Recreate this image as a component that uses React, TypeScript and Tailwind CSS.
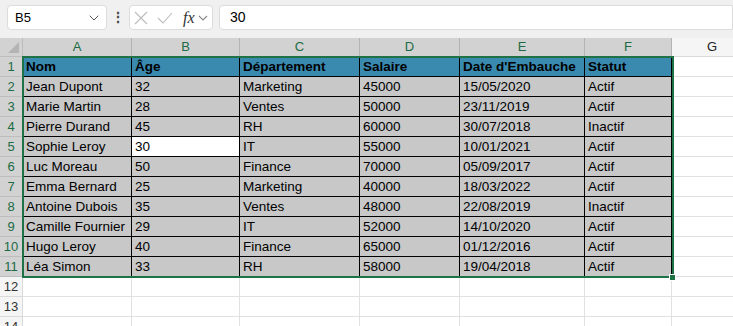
import { ChevronDown } from "lucide-react";

const cols = [
  { key: "A", w: 109 },
  { key: "B", w: 108 },
  { key: "C", w: 120 },
  { key: "D", w: 100 },
  { key: "E", w: 125 },
  { key: "F", w: 87 },
];

const head = ["Nom", "Âge", "Département", "Salaire", "Date d'Embauche", "Statut"];

const rows = [
  ["Jean Dupont", "32", "Marketing", "45000", "15/05/2020", "Actif"],
  ["Marie Martin", "28", "Ventes", "50000", "23/11/2019", "Actif"],
  ["Pierre Durand", "45", "RH", "60000", "30/07/2018", "Inactif"],
  ["Sophie Leroy", "30", "IT", "55000", "10/01/2021", "Actif"],
  ["Luc Moreau", "50", "Finance", "70000", "05/09/2017", "Actif"],
  ["Emma Bernard", "25", "Marketing", "40000", "18/03/2022", "Actif"],
  ["Antoine Dubois", "35", "Ventes", "48000", "22/08/2019", "Inactif"],
  ["Camille Fournier", "29", "IT", "52000", "14/10/2020", "Actif"],
  ["Hugo Leroy", "40", "Finance", "65000", "01/12/2016", "Actif"],
  ["Léa Simon", "33", "RH", "58000", "19/04/2018", "Actif"],
];

const font = { fontFamily: '"Liberation Sans", Arial, sans-serif' };

function RowHead({ n, on }: { n: number; on: boolean }) {
  return (
    <div
      className={`w-[23px] h-[20px] shrink-0 flex items-center justify-center pt-[1px] text-[13px] border-r border-b ${
        on ? "bg-[#d2d2d2] text-[#1c6b44] border-[#bdbdbd]" : "bg-[#f5f5f5] text-[#333] border-[#dadada]"
      }`}
    >
      {n}
    </div>
  );
}

export default function App() {
  return (
    <div className="w-[733px] h-[326px] overflow-hidden bg-white text-black" style={font}>
      {/* formula bar */}
      <div className="h-[38px] bg-[#f0f0f0] flex items-center pl-[7px] pb-[3px]">
        <div className="w-[100px] h-[25px] bg-white border border-[#dcdcdc] rounded-[4px] flex items-center justify-between pl-[7px] pr-[4px] text-[13px]">
          <span>B5</span>
          <ChevronDown size={16} strokeWidth={1.5} className="text-[#555]" />
        </div>
        <div className="w-[22px] flex justify-center text-[14px] font-bold text-[#444]">⋮</div>
        <div className="w-[84px] h-[25px] bg-white border border-[#dcdcdc] rounded-[4px] flex items-center pl-[4px]">
          <svg width="14" height="14" viewBox="0 0 14 14" className="shrink-0">
            <path d="M1 1 L13 13 M13 1 L1 13" stroke="#bcbcbc" strokeWidth="1.1" fill="none" />
          </svg>
          <svg width="16" height="14" viewBox="0 0 16 14" className="shrink-0 ml-[9px]">
            <path d="M1 7 L6 12 L15 2" stroke="#bcbcbc" strokeWidth="1.1" fill="none" />
          </svg>
          <span
            className="ml-[10px] text-[16px] italic text-[#333] leading-none"
            style={{ fontFamily: '"Liberation Serif", serif' }}
          >
            fx
          </span>
          <svg width="10" height="8" viewBox="0 0 10 8" className="shrink-0 ml-[3px]">
            <path d="M1 2 L5 6 L9 2" stroke="#888" strokeWidth="1.1" fill="none" />
          </svg>
        </div>
        <div className="ml-[6px] flex-1 h-[25px] bg-white border border-[#dcdcdc] rounded-l-[4px] flex items-center pl-[10px] text-[14px]">
          30
        </div>
      </div>

      {/* grid */}
      <div className="relative">
        <div className="flex h-[19px]">
          <div className="w-[23px] shrink-0 bg-[#d2d2d2] border-r border-b border-[#bdbdbd] relative">
            <div className="absolute right-[3px] bottom-[3px] w-0 h-0 border-l-[11px] border-l-transparent border-b-[11px] border-b-[#b4b4b4]" />
          </div>
          {cols.map((c) => (
            <div
              key={c.key}
              className="shrink-0 bg-[#d2d2d2] border-r border-b border-[#b4b4b4] flex items-center justify-center text-[13px] text-[#1c6b44]"
              style={{ width: c.w }}
            >
              {c.key}
            </div>
          ))}
          <div className="w-[80px] shrink-0 bg-[#f5f5f5] border-b border-[#dadada] flex items-center justify-center text-[13px] text-[#222]">
            G
          </div>
        </div>

        {[head, ...rows].map((r, i) => (
          <div key={i} className="flex h-[20px]">
            <RowHead n={i + 1} on />
            {r.map((v, j) => (
              <div
                key={j}
                className={`shrink-0 border-r border-b border-black pl-[3px] pt-[2px] flex items-center text-[13.5px] whitespace-nowrap overflow-hidden ${
                  i === 0 ? "bg-[#3a8ab0] font-bold" : i === 4 && j === 1 ? "bg-white" : "bg-[#c8c8c8]"
                }`}
                style={{ width: cols[j].w }}
              >
                {v}
              </div>
            ))}
            <div className="flex-1 border-b border-[#e1e1e1]" />
          </div>
        ))}

        {[12, 13, 14].map((n) => (
          <div key={n} className="flex h-[20px]">
            <RowHead n={n} on={false} />
            {cols.map((c) => (
              <div key={c.key} className="shrink-0 border-r border-b border-[#e1e1e1]" style={{ width: c.w }} />
            ))}
            <div className="flex-1 border-b border-[#e1e1e1]" />
          </div>
        ))}

        {/* selection A1:F11 */}
        <div className="absolute left-[22px] top-[18px] w-[652px] h-[222px] border-2 border-[#1f7246] pointer-events-none" />
        <div className="absolute left-[669px] top-[236px] w-[7px] h-[7px] bg-[#1f7246] border border-white" />
      </div>
    </div>
  );
}
